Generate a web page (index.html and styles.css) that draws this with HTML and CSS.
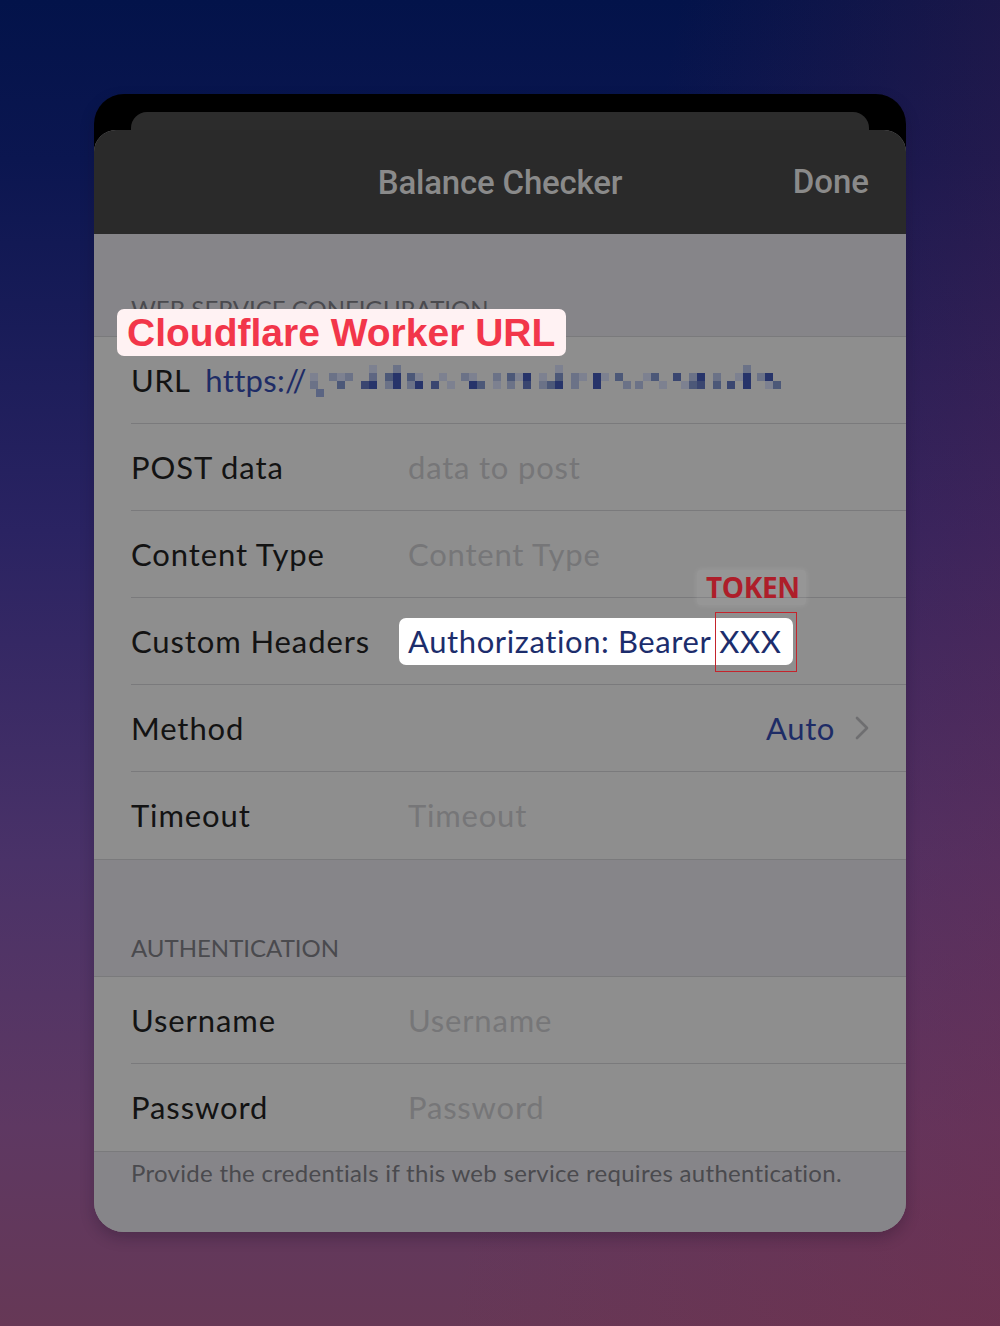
FILE: index.html
```html
<!DOCTYPE html>
<html>
<head>
<meta charset="utf-8">
<link rel="stylesheet" href="styles.css">
</head>
<body>
<div class="page">
  <div class="device">
    <div class="back-sheet"></div>
    <div class="sheet">
      <div class="navbar">
        <div class="nav-title">Balance Checker</div>
        <div class="nav-done">Done</div>
      </div>
      <div class="content">
        <div class="section-header">WEB SERVICE CONFIGURATION</div>
        <div class="group">
          <div class="row"><div class="row-inner">
            <span class="label label-url">URL</span>
            <span class="value value-url">https://</span>
            <svg class="pixels" width="480" height="36" viewBox="0 0 480 36">
              <g>
                <rect x="3" y="8" width="8" height="8" fill="#7d8190"/>
                <rect x="3" y="16" width="8" height="8" fill="#6b7287"/>
                <rect x="9" y="24" width="8" height="8" fill="#5a6482"/>
                <rect x="22" y="8" width="8" height="8" fill="#6b7287"/>
                <rect x="30" y="8" width="8" height="8" fill="#7d8190"/>
                <rect x="30" y="16" width="8" height="8" fill="#4c5878"/>
                <rect x="38" y="8" width="8" height="8" fill="#6b7287"/>
                <rect x="54" y="16" width="8" height="8" fill="#3a4670"/>
                <rect x="62" y="8" width="8" height="8" fill="#5e6682"/>
                <rect x="62" y="16" width="8" height="8" fill="#27346a"/>
                <rect x="62" y="0" width="8" height="8" fill="#7d8190"/>
                <rect x="78" y="8" width="8" height="8" fill="#4c5878"/>
                <rect x="78" y="16" width="8" height="8" fill="#6b7287"/>
                <rect x="86" y="8" width="8" height="8" fill="#27346a"/>
                <rect x="86" y="16" width="8" height="8" fill="#27346a"/>
                <rect x="86" y="0" width="8" height="8" fill="#6b7287"/>
                <rect x="100" y="8" width="8" height="8" fill="#4c5878"/>
                <rect x="100" y="16" width="8" height="8" fill="#6b7287"/>
                <rect x="108" y="8" width="8" height="8" fill="#7d8190"/>
                <rect x="108" y="16" width="8" height="8" fill="#27346a"/>
                <rect x="124" y="16" width="8" height="8" fill="#3a4670"/>
                <rect x="132" y="8" width="8" height="8" fill="#7d8190"/>
                <rect x="140" y="16" width="8" height="8" fill="#7d8190"/>
                <rect x="154" y="8" width="8" height="8" fill="#6b7287"/>
                <rect x="162" y="8" width="8" height="8" fill="#7d8190"/>
                <rect x="162" y="16" width="8" height="8" fill="#27346a"/>
                <rect x="170" y="16" width="8" height="8" fill="#4c5878"/>
                <rect x="186" y="8" width="8" height="8" fill="#6b7287"/>
                <rect x="186" y="16" width="8" height="8" fill="#7d8190"/>
                <rect x="200" y="8" width="8" height="8" fill="#4c5878"/>
                <rect x="200" y="16" width="8" height="8" fill="#6b7287"/>
                <rect x="208" y="8" width="8" height="8" fill="#7d8190"/>
                <rect x="216" y="8" width="8" height="8" fill="#27346a"/>
                <rect x="216" y="16" width="8" height="8" fill="#3a4670"/>
                <rect x="232" y="8" width="8" height="8" fill="#7d8190"/>
                <rect x="232" y="16" width="8" height="8" fill="#6b7287"/>
                <rect x="240" y="16" width="8" height="8" fill="#4c5878"/>
                <rect x="248" y="8" width="8" height="8" fill="#4c5878"/>
                <rect x="248" y="16" width="8" height="8" fill="#27346a"/>
                <rect x="248" y="0" width="8" height="8" fill="#7d8190"/>
                <rect x="264" y="8" width="8" height="8" fill="#6b7287"/>
                <rect x="264" y="16" width="8" height="8" fill="#6b7287"/>
                <rect x="272" y="8" width="8" height="8" fill="#7d8190"/>
                <rect x="286" y="8" width="8" height="8" fill="#27346a"/>
                <rect x="286" y="16" width="8" height="8" fill="#27346a"/>
                <rect x="294" y="8" width="8" height="8" fill="#7d8190"/>
                <rect x="308" y="8" width="8" height="8" fill="#4c5878"/>
                <rect x="316" y="16" width="8" height="8" fill="#6b7287"/>
                <rect x="328" y="16" width="8" height="8" fill="#6b7287"/>
                <rect x="336" y="8" width="8" height="8" fill="#7d8190"/>
                <rect x="344" y="8" width="8" height="8" fill="#4c5878"/>
                <rect x="352" y="16" width="8" height="8" fill="#7d8190"/>
                <rect x="366" y="8" width="8" height="8" fill="#3a4670"/>
                <rect x="374" y="16" width="8" height="8" fill="#7d8190"/>
                <rect x="382" y="8" width="8" height="8" fill="#6b7287"/>
                <rect x="382" y="16" width="8" height="8" fill="#4c5878"/>
                <rect x="390" y="8" width="8" height="8" fill="#27346a"/>
                <rect x="390" y="16" width="8" height="8" fill="#3a4670"/>
                <rect x="406" y="8" width="8" height="8" fill="#6b7287"/>
                <rect x="406" y="16" width="8" height="8" fill="#4c5878"/>
                <rect x="420" y="16" width="8" height="8" fill="#3a4670"/>
                <rect x="428" y="8" width="8" height="8" fill="#7d8190"/>
                <rect x="436" y="0" width="8" height="8" fill="#6b7287"/>
                <rect x="436" y="8" width="8" height="8" fill="#27346a"/>
                <rect x="436" y="16" width="8" height="8" fill="#27346a"/>
                <rect x="450" y="8" width="8" height="8" fill="#6b7287"/>
                <rect x="458" y="8" width="8" height="8" fill="#27346a"/>
                <rect x="458" y="16" width="8" height="8" fill="#7d8190"/>
                <rect x="466" y="16" width="8" height="8" fill="#4c5878"/>
              </g>
            </svg>
          </div></div>
          <div class="row"><div class="row-inner">
            <span class="label">POST data</span>
            <span class="placeholder">data to post</span>
          </div></div>
          <div class="row"><div class="row-inner">
            <span class="label">Content Type</span>
            <span class="placeholder">Content Type</span>
          </div></div>
          <div class="row"><div class="row-inner">
            <span class="label">Custom Headers</span>
            <span class="value value-box">Authorization: Bearer XXX</span>
          </div></div>
          <div class="row"><div class="row-inner">
            <span class="label">Method</span>
            <span class="spacer"></span>
            <span class="value">Auto</span>
            <svg class="chevron" width="14" height="24" viewBox="0 0 14 24"><polyline points="2,2 12,12 2,22" fill="none" stroke="#6e6e70" stroke-width="2.6" stroke-linecap="round" stroke-linejoin="round"/></svg>
          </div></div>
          <div class="row row-last"><div class="row-inner">
            <span class="label">Timeout</span>
            <span class="placeholder">Timeout</span>
          </div></div>
        </div>
        <div class="section-header section-header-auth">AUTHENTICATION</div>
        <div class="group">
          <div class="row"><div class="row-inner">
            <span class="label">Username</span>
            <span class="placeholder">Username</span>
          </div></div>
          <div class="row row-last"><div class="row-inner">
            <span class="label">Password</span>
            <span class="placeholder">Password</span>
          </div></div>
        </div>
        <div class="footer-note">Provide the credentials if this web service requires authentication.</div>

        <div class="badge-url">Cloudflare Worker URL</div>
        <div class="badge-token">TOKEN</div>
        <div class="token-frame"></div>
      </div>
    </div>
  </div>
</div>
</body>
</html>
```
FILE: styles.css
```css
html, body {
  margin: 0;
  padding: 0;
}
body {
  width: 1000px;
  height: 1326px;
  overflow: hidden;
  background:
    linear-gradient(100deg, rgba(0,0,0,0) 55%, rgba(120,40,70,0.35) 100%),
    linear-gradient(180deg, #03134a 0%, #0b1650 12%, #2a2362 40%, #4a3268 65%, #5e3862 85%, #663856 100%);
  font-family: "Lato", "Open Sans", sans-serif;
}
.page {
  padding: 94px 94px 0;
}
.device {
  width: 812px;
  border-radius: 30px;
  background: linear-gradient(#000, #000) top / 100% 60px no-repeat;
  padding-top: 18px;
  box-shadow: 0 6px 14px rgba(20, 10, 30, 0.25);
}
.back-sheet {
  margin: 0 37px;
  height: 18px;
  background: #2c2c2c;
  border-radius: 16px 16px 0 0;
}
.sheet {
  border-radius: 22px 22px 30px 30px;
  overflow: hidden;
  background: #868589;
}
.navbar {
  height: 104px;
  background: #2a2a2a;
  position: relative;
  display: flex;
  align-items: center;
  justify-content: center;
  font-family: "Roboto", "Inter", sans-serif;
  font-weight: 500;
  font-size: 33px;
  color: #8a8a8a;
}
.nav-title {
  letter-spacing: -0.2px;
}
.nav-done {
  position: absolute;
  right: 37px;
  top: 0;
  line-height: 104px;
}
.content {
  position: relative;
  height: 998px;
  background: #868589;
}
.section-header {
  height: 102px;
  box-sizing: border-box;
  padding: 0 37px 12px;
  display: flex;
  align-items: flex-end;
  font-size: 24px;
  line-height: 30px;
  color: #4a4a4e;
  letter-spacing: 0;
}
.section-header-auth {
  height: 116px;
  padding-bottom: 13px;
}
.group {
  background: #8e8e8e;
  border-top: 1px solid #7a7a7c;
  border-bottom: 1px solid #7a7a7c;
}
.row {
  padding-left: 37px;
}
.row-inner {
  height: 86px;
  border-bottom: 1px solid #7a7a7c;
  display: flex;
  align-items: center;
  padding-right: 37px;
}
.row-last .row-inner {
  border-bottom-color: transparent;
}
.label {
  width: 277px;
  flex: none;
  font-size: 31px;
  color: #131313;
  letter-spacing: 0.9px;
}
.label-url {
  width: auto;
  margin-right: 15px;
  letter-spacing: 0.4px;
}
.value {
  font-size: 31px;
  color: #1e2c66;
  letter-spacing: 0.6px;
}
.value-url {
  letter-spacing: 0.3px;
}
.pixels {
  margin-left: 0;
  margin-top: 6px;
}
.placeholder {
  font-size: 31px;
  color: #767678;
  letter-spacing: 0.8px;
}
.value-box {
  background: #ffffff;
  border-radius: 7px;
  margin-left: -9px;
  padding: 0 12px 0 9px;
  height: 47px;
  line-height: 47px;
  color: #1c2d6c;
}
.spacer {
  flex: 1;
}
.chevron {
  margin-left: 20px;
}
.footer-note {
  padding: 6px 37px 0;
  font-size: 24px;
  line-height: 30px;
  color: #4a4a4e;
  letter-spacing: 0.3px;
}
.badge-url {
  position: absolute;
  left: 23px;
  top: 75px;
  height: 47px;
  padding: 0 11px 0 10px;
  background: #fff2f3;
  border-radius: 7px;
  font-family: "Liberation Sans", Arial, sans-serif;
  font-weight: 700;
  font-size: 39px;
  line-height: 47px;
  color: #f2364a;
}
.badge-token {
  position: absolute;
  left: 603px;
  top: 336px;
  height: 35px;
  padding: 0 6px 0 9px;
  background: rgba(255, 255, 255, 0.08);
  box-shadow: 0 0 6px rgba(255, 255, 255, 0.12);
  border-radius: 4px;
  font-family: "Open Sans", "Liberation Sans", sans-serif;
  font-weight: 700;
  font-size: 28px;
  line-height: 35px;
  color: #ae1e2a;
  letter-spacing: -0.4px;
}
.token-frame {
  position: absolute;
  left: 621px;
  top: 378px;
  width: 80px;
  height: 58px;
  border: 1.5px solid #c4242c;
}
```
